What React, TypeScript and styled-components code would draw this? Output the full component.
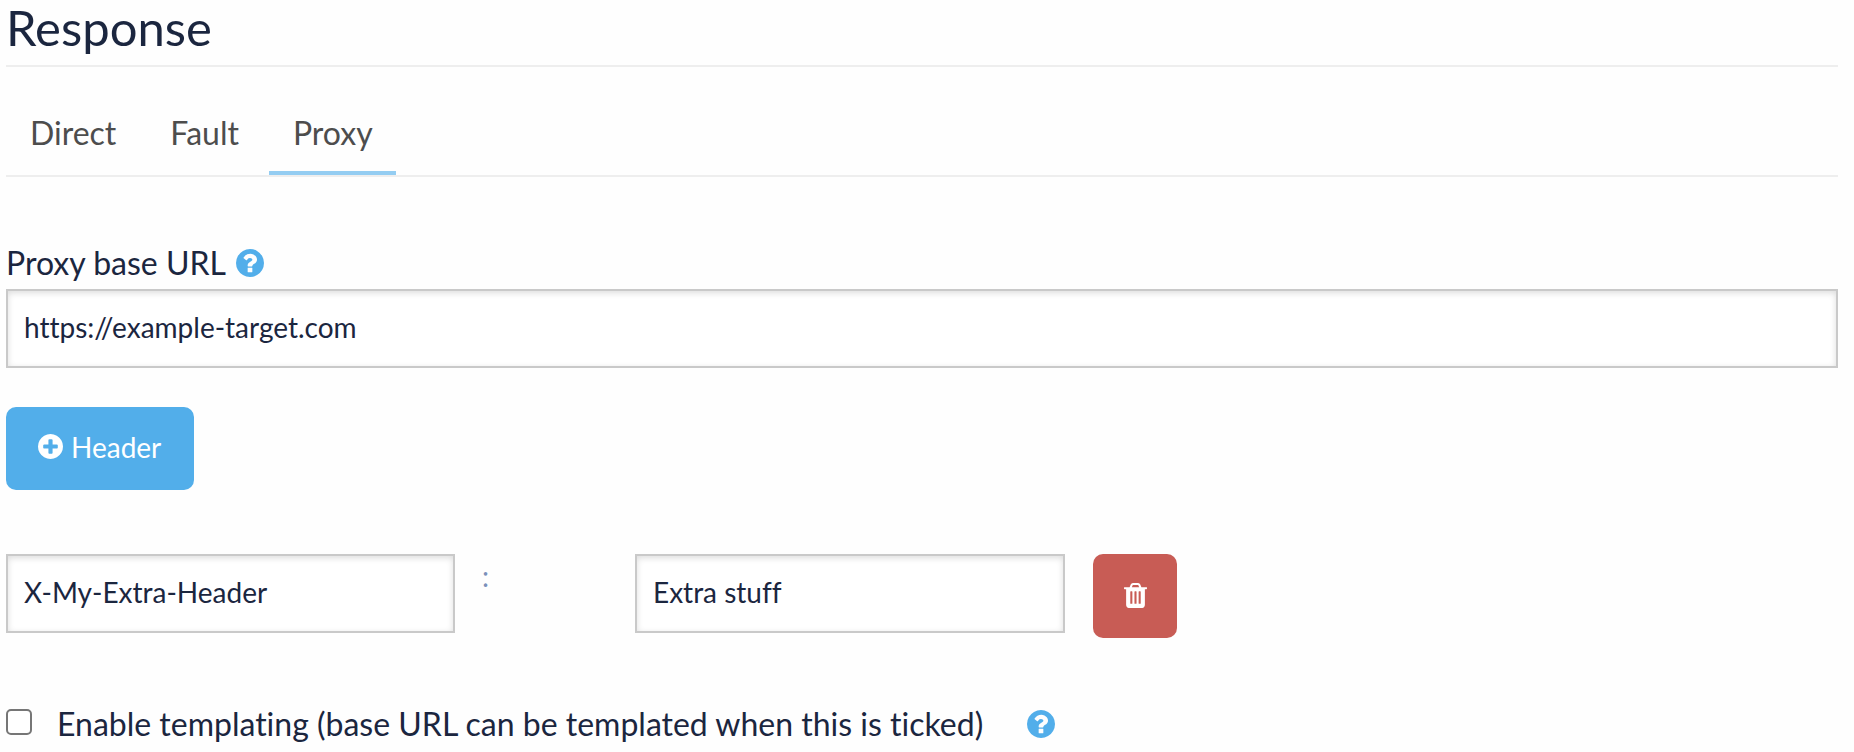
import React, { useState } from "react";
import styled, { createGlobalStyle } from "styled-components";

const ink = "#1b263f";
const blue = "#52aeea";

const GlobalStyle = createGlobalStyle`
  *, *::before, *::after { box-sizing: border-box; }
  body {
    margin: 0;
    background: #fefefe;
    color: ${ink};
    font-family: Lato, "Open Sans", sans-serif;
    font-size: 32px;
    font-variant-ligatures: none;
    line-height: 40px;
  }
  button, input { font: inherit; font-variant-ligatures: none; color: inherit; }
`;

const Page = styled.main`
  padding: 0 16px 8px 6px;
`;

const Title = styled.h2`
  margin: 0;
  padding: 0 0 10px;
  border-bottom: 2px solid #eee;
  font-size: 49px;
  font-weight: 400;
  line-height: 55px;
`;

const Tabs = styled.div`
  display: flex;
  gap: 7px;
  margin-top: 30px;
  border-bottom: 2px solid #eee;
`;

const Tab = styled.button<{ $active: boolean }>`
  height: 78px;
  padding: 0 23px 2px 24px;
  border: 0;
  border-bottom: 4px solid ${(p) => (p.$active ? "#94cdf2" : "transparent")};
  background: none;
  color: #4d4d4d;
  cursor: pointer;
`;

const LabelRow = styled.div`
  display: flex;
  align-items: center;
  gap: 10px;
  margin-top: 66px;
  padding-bottom: 6px;
`;

const HelpButton = styled.button`
  display: flex;
  padding: 0;
  border: 0;
  background: none;
  color: ${blue};
  cursor: pointer;
`;

const TextInput = styled.input`
  display: block;
  width: 100%;
  height: 79px;
  padding: 0 16px 4px;
  border: 2px solid #c9c9c9;
  border-radius: 0;
  background: #fff;
  box-shadow: inset 0 2px 6px rgba(0, 0, 0, 0.14);
  font-size: 28px;
  outline: 0;
`;

const AddButton = styled.button`
  display: flex;
  align-items: center;
  gap: 8px;
  height: 83px;
  margin-top: 39px;
  padding: 0 33px 4px 32px;
  border: 0;
  border-radius: 10px;
  background: ${blue};
  color: #fff;
  font-size: 28px;
  cursor: pointer;
`;

const HeaderRow = styled.div`
  display: grid;
  grid-template-columns: 449fr 180fr 430fr 773fr;
  align-items: start;
  margin-top: 64px;
`;

const Colon = styled.span`
  padding: 2px 0 0 27px;
  color: #7a90ba;
  font-size: 28px;
`;

const DeleteButton = styled.button`
  display: flex;
  align-items: center;
  justify-content: center;
  width: 84px;
  height: 84px;
  margin-left: 28px;
  padding: 0 0 2px;
  border: 0;
  border-radius: 10px;
  background: #c85c55;
  color: #fff;
  cursor: pointer;
`;

const CheckRow = styled.div`
  display: flex;
  align-items: center;
  margin-top: 66px;
`;

const Checkbox = styled.input`
  appearance: none;
  width: 26px;
  height: 26px;
  margin: 0 25px 4px 0;
  border: 2px solid #767676;
  border-radius: 5px;
  background: #fff;

  &:checked { background: ${blue}; }
`;

const CheckLabel = styled.label`
  margin-right: 44px;
`;

const disc =
  "M1664 896q0 209-103 385.5t-279.5 279.5-385.5 103-385.5-103-279.5-279.5-103-385.5 103-385.5 279.5-279.5 385.5-103 385.5 103 279.5 279.5 103 385.5z";

const HelpIcon = () => (
  <svg width="28" height="28" viewBox="128 128 1536 1536" fill="currentColor" aria-hidden="true">
    <path d={"M1024 1376v-192q0-14-9-23t-23-9h-192q-14 0-23 9t-9 23v192q0 14 9 23t23 9h192q14 0 23-9t9-23zm256-672q0-88-55.5-163t-138.5-116-170-41q-243 0-371 213-15 24 8 42l132 100q7 6 19 6 16 0 25-12 53-68 86-92 34-24 86-24 48 0 85.5 26t37.5 59q0 38-20 61t-68 45q-63 28-115.5 86.5t-52.5 125.5v36q0 14 9 23t23 9h192q14 0 23-9t9-23q0-19 21.5-49.5t54.5-49.5q32-18 49-28.5t46-35 44.5-48 28-60.5 12.5-81z" + disc} fillRule="evenodd" />
  </svg>
);

const PlusIcon = () => (
  <svg width="25" height="25" viewBox="128 128 1536 1536" fill="currentColor" aria-hidden="true">
    <path d={"M1344 960v-128q0-26-19-45t-45-19h-256v-256q0-26-19-45t-45-19h-128q-26 0-45 19t-19 45v256h-256q-26 0-45 19t-19 45v128q0 26 19 45t45 19h256v256q0 26 19 45t45 19h128q26 0 45-19t19-45v-256h256q26 0 45-19t19-45z" + disc} fillRule="evenodd" />
  </svg>
);

const TrashIcon = () => (
  <svg width="23" height="25" viewBox="192 128 1408 1536" fill="currentColor" aria-hidden="true">
    <path
      d="M704 1376v-704q0-14-9-23t-23-9h-64q-14 0-23 9t-9 23v704q0 14 9 23t23 9h64q14 0 23-9t9-23zm256 0v-704q0-14-9-23t-23-9h-64q-14 0-23 9t-9 23v704q0 14 9 23t23 9h64q14 0 23-9t9-23zm256 0v-704q0-14-9-23t-23-9h-64q-14 0-23 9t-9 23v704q0 14 9 23t23 9h64q14 0 23-9t9-23zm-544-992h448l-48-117q-7-9-17-11h-317q-10 2-17 11zm928 32v64q0 14-9 23t-23 9h-96v948q0 83-47 143.5t-113 60.5h-832q-66 0-113-58.5t-47-141.5v-952h-96q-14 0-23-9t-9-23v-64q0-14 9-23t23-9h309l70-167q15-37 54-63t79-26h320q40 0 79 26t54 63l70 167h309q14 0 23 9t9 23z"
      fillRule="evenodd"
    />
  </svg>
);

const tabs = ["Direct", "Fault", "Proxy"];

export default function App() {
  const [active, setActive] = useState("Proxy");
  return (
    <>
      <GlobalStyle />
      <Page>
        <Title>Response</Title>
        <Tabs role="tablist">
          {tabs.map((name) => (
            <Tab key={name} type="button" role="tab" aria-selected={active === name} $active={active === name} onClick={() => setActive(name)}>
              {name}
            </Tab>
          ))}
        </Tabs>
        <LabelRow>
          <label htmlFor="base-url">Proxy base URL</label>
          <HelpButton type="button" aria-label="Help on the proxy base URL"><HelpIcon /></HelpButton>
        </LabelRow>
        <TextInput id="base-url" defaultValue="https://example-target.com" />
        <AddButton type="button"><PlusIcon />Header</AddButton>
        <HeaderRow>
          <TextInput aria-label="Header name" defaultValue="X-My-Extra-Header" />
          <Colon>:</Colon>
          <TextInput aria-label="Header value" defaultValue="Extra stuff" />
          <DeleteButton type="button" aria-label="Delete header"><TrashIcon /></DeleteButton>
        </HeaderRow>
        <CheckRow>
          <Checkbox type="checkbox" id="templating" />
          <CheckLabel htmlFor="templating">Enable templating (base URL can be templated when this is ticked)</CheckLabel>
          <HelpButton type="button" aria-label="Help on templating"><HelpIcon /></HelpButton>
        </CheckRow>
      </Page>
    </>
  );
}
